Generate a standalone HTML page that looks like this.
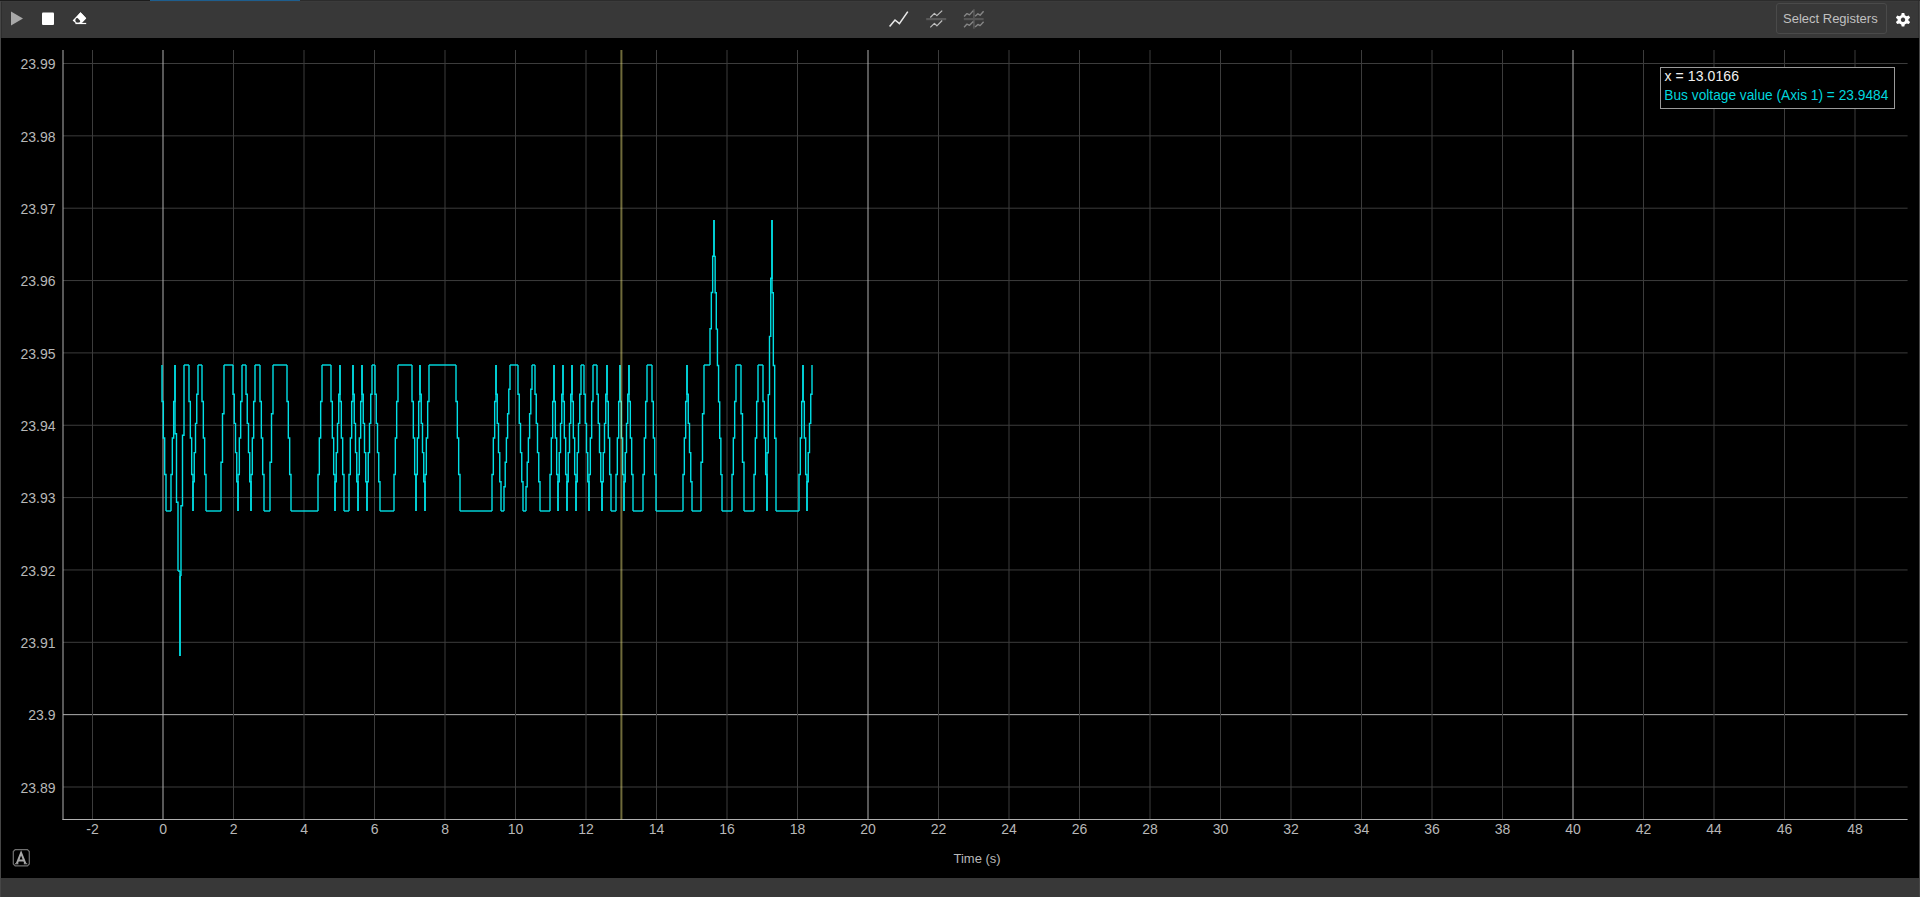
<!DOCTYPE html>
<html><head><meta charset="utf-8">
<style>
html,body{margin:0;padding:0;}
body{width:1920px;height:897px;overflow:hidden;background:#383838;position:relative;font-family:"Liberation Sans",sans-serif;}
#top{position:absolute;left:0;top:0;width:1920px;height:1px;background:#2c2c2c;}
#topl{position:absolute;left:0;top:0;width:150px;height:1px;background:#1c1c1c;}
#topb{position:absolute;left:150px;top:0;width:150px;height:1px;background:#1e5e8e;}
#lb{position:absolute;left:0;top:1px;width:1px;height:896px;background:#464646;}
#rb{position:absolute;left:1919px;top:1px;width:1px;height:896px;background:#474747;}
#rb2{position:absolute;left:1918px;top:1px;width:1px;height:37px;background:#303030;}
#lb2{position:absolute;left:1px;top:1px;width:1px;height:37px;background:#2e2e2e;}
#tl{position:absolute;left:1px;top:1px;width:1918px;height:1px;background:#3b3b3b;}
#plot{position:absolute;left:1px;top:38px;width:1918px;height:840px;background:#000;}
#btn{position:absolute;left:1776px;top:3px;width:111px;height:31px;border:1px solid #4a4a4a;border-radius:3px;box-sizing:border-box;}
#btntxt{position:absolute;left:1783px;top:11px;font-size:13px;color:#c0c0c0;line-height:16px;white-space:nowrap;}
svg text{font-family:"Liberation Sans",sans-serif;font-size:14px;fill:#b8b8b8;}
</style></head><body>
<div id="top"></div><div id="topl"></div><div id="topb"></div>
<div id="lb"></div><div id="lb2"></div><div id="tl"></div><div id="rb"></div><div id="rb2"></div>
<div id="plot"></div>
<div id="btn"></div>
<div id="btntxt">Select Registers</div>
<svg width="1920" height="897" style="position:absolute;left:0;top:0">
<!-- toolbar icons -->
<path d="M11,11.5 L23,18.5 L11,25.5 Z" fill="#a8a8a8"/>
<rect x="42" y="12.5" width="12" height="12.5" rx="1" fill="#ffffff"/>
<path d="M80.5,12.3 L86.2,18.3 L81.6,23 H75.6 L72.6,20.4 Z" fill="#ffffff"/>
<circle cx="77.9" cy="20.3" r="2.5" fill="#383838"/>
<path d="M80.5,12.3 L86.2,18.3 L82,22.7 L76.6,17 Z" fill="#ffffff"/>
<rect x="75.4" y="22.9" width="10.8" height="1.2" fill="#ffffff"/>
<path d="M889.6,26.4 L895,20 L899.4,23.6 L907.8,11.6" fill="none" stroke="#e8e8e8" stroke-width="1.6"/>
<rect x="926.2" y="18" width="20" height="2.2" fill="#595959"/>
<g fill="none" stroke="#bdbdbd" stroke-width="1.2" stroke-linejoin="round">
<path d="M930.3,17.5 L934.4,13.4 L936.9,15.6 L942.2,10.6"/>
<path d="M930.3,27.4 L934.4,23.4 L936.9,25.8 L942.2,20.5"/>
</g>
<rect x="963.8" y="18" width="19.8" height="2.2" fill="#555"/>
<rect x="973" y="9.2" width="1.8" height="19.5" fill="#555"/>
<g fill="none" stroke="#858585" stroke-width="1.4" stroke-linejoin="round">
<path d="M964.1,16.6 L967,13.6 L969.5,14.9 L973.3,10.6"/>
<path d="M975.1,16.3 L977.9,13.8 L980.1,15.2 L983.6,11.3"/>
<path d="M964.1,27.2 L967,24.1 L969.5,25.3 L973.3,21.6"/>
<path d="M975.1,27 L977.9,24.4 L980.1,25.6 L983.6,21.8"/>
</g>
<!-- gear -->
<g transform="translate(1903,19.8)">
<path d="M-1.3,-6.8 H1.3 L1.8,-4.6 L3.7,-3.6 L5.8,-4.3 L7.1,-2.1 L5.4,-0.6 V0.6 L7.1,2.1 L5.8,4.3 L3.7,3.6 L1.8,4.6 L1.3,6.8 H-1.3 L-1.8,4.6 L-3.7,3.6 L-5.8,4.3 L-7.1,2.1 L-5.4,0.6 V-0.6 L-7.1,-2.1 L-5.8,-4.3 L-3.7,-3.6 L-1.8,-4.6 Z M0,-2.2 A2.2,2.2 0 1 0 0.01,-2.2 Z" fill="#ffffff" fill-rule="evenodd"/>
</g>
<line x1="63" y1="63.50" x2="1907.6" y2="63.50" stroke="#3c3c3c" stroke-width="1"/>
<line x1="63" y1="135.85" x2="1907.6" y2="135.85" stroke="#3c3c3c" stroke-width="1"/>
<line x1="63" y1="208.20" x2="1907.6" y2="208.20" stroke="#3c3c3c" stroke-width="1"/>
<line x1="63" y1="280.55" x2="1907.6" y2="280.55" stroke="#3c3c3c" stroke-width="1"/>
<line x1="63" y1="352.90" x2="1907.6" y2="352.90" stroke="#3c3c3c" stroke-width="1"/>
<line x1="63" y1="425.25" x2="1907.6" y2="425.25" stroke="#3c3c3c" stroke-width="1"/>
<line x1="63" y1="497.60" x2="1907.6" y2="497.60" stroke="#3c3c3c" stroke-width="1"/>
<line x1="63" y1="569.95" x2="1907.6" y2="569.95" stroke="#3c3c3c" stroke-width="1"/>
<line x1="63" y1="642.30" x2="1907.6" y2="642.30" stroke="#3c3c3c" stroke-width="1"/>
<line x1="63" y1="714.65" x2="1907.6" y2="714.65" stroke="#b0b0b0" stroke-width="1"/>
<line x1="63" y1="787.00" x2="1907.6" y2="787.00" stroke="#3c3c3c" stroke-width="1"/>
<line x1="92.50" y1="50" x2="92.50" y2="819.5" stroke="#3c3c3c" stroke-width="1"/>
<line x1="163.00" y1="50" x2="163.00" y2="819.5" stroke="#b0b0b0" stroke-width="1"/>
<line x1="233.50" y1="50" x2="233.50" y2="819.5" stroke="#3c3c3c" stroke-width="1"/>
<line x1="304.00" y1="50" x2="304.00" y2="819.5" stroke="#3c3c3c" stroke-width="1"/>
<line x1="374.50" y1="50" x2="374.50" y2="819.5" stroke="#3c3c3c" stroke-width="1"/>
<line x1="445.00" y1="50" x2="445.00" y2="819.5" stroke="#3c3c3c" stroke-width="1"/>
<line x1="515.50" y1="50" x2="515.50" y2="819.5" stroke="#3c3c3c" stroke-width="1"/>
<line x1="586.00" y1="50" x2="586.00" y2="819.5" stroke="#3c3c3c" stroke-width="1"/>
<line x1="656.50" y1="50" x2="656.50" y2="819.5" stroke="#3c3c3c" stroke-width="1"/>
<line x1="727.00" y1="50" x2="727.00" y2="819.5" stroke="#3c3c3c" stroke-width="1"/>
<line x1="797.50" y1="50" x2="797.50" y2="819.5" stroke="#3c3c3c" stroke-width="1"/>
<line x1="868.00" y1="50" x2="868.00" y2="819.5" stroke="#b0b0b0" stroke-width="1"/>
<line x1="938.50" y1="50" x2="938.50" y2="819.5" stroke="#3c3c3c" stroke-width="1"/>
<line x1="1009.00" y1="50" x2="1009.00" y2="819.5" stroke="#3c3c3c" stroke-width="1"/>
<line x1="1079.50" y1="50" x2="1079.50" y2="819.5" stroke="#3c3c3c" stroke-width="1"/>
<line x1="1150.00" y1="50" x2="1150.00" y2="819.5" stroke="#3c3c3c" stroke-width="1"/>
<line x1="1220.50" y1="50" x2="1220.50" y2="819.5" stroke="#3c3c3c" stroke-width="1"/>
<line x1="1291.00" y1="50" x2="1291.00" y2="819.5" stroke="#3c3c3c" stroke-width="1"/>
<line x1="1361.50" y1="50" x2="1361.50" y2="819.5" stroke="#3c3c3c" stroke-width="1"/>
<line x1="1432.00" y1="50" x2="1432.00" y2="819.5" stroke="#3c3c3c" stroke-width="1"/>
<line x1="1502.50" y1="50" x2="1502.50" y2="819.5" stroke="#3c3c3c" stroke-width="1"/>
<line x1="1573.00" y1="50" x2="1573.00" y2="819.5" stroke="#b0b0b0" stroke-width="1"/>
<line x1="1643.50" y1="50" x2="1643.50" y2="819.5" stroke="#3c3c3c" stroke-width="1"/>
<line x1="1714.00" y1="50" x2="1714.00" y2="819.5" stroke="#3c3c3c" stroke-width="1"/>
<line x1="1784.50" y1="50" x2="1784.50" y2="819.5" stroke="#3c3c3c" stroke-width="1"/>
<line x1="1855.00" y1="50" x2="1855.00" y2="819.5" stroke="#3c3c3c" stroke-width="1"/>
<line x1="63.0" y1="50" x2="63.0" y2="820" stroke="#b0b0b0" stroke-width="1"/>
<line x1="62.5" y1="819.5" x2="1907.6" y2="819.5" stroke="#b0b0b0" stroke-width="1"/>
<text x="55.5" y="69.3" text-anchor="end">23.99</text>
<text x="55.5" y="141.7" text-anchor="end">23.98</text>
<text x="55.5" y="214.0" text-anchor="end">23.97</text>
<text x="55.5" y="286.4" text-anchor="end">23.96</text>
<text x="55.5" y="358.7" text-anchor="end">23.95</text>
<text x="55.5" y="431.1" text-anchor="end">23.94</text>
<text x="55.5" y="503.4" text-anchor="end">23.93</text>
<text x="55.5" y="575.8" text-anchor="end">23.92</text>
<text x="55.5" y="648.1" text-anchor="end">23.91</text>
<text x="55.5" y="720.4" text-anchor="end">23.9</text>
<text x="55.5" y="792.8" text-anchor="end">23.89</text>
<text x="92.6" y="834" text-anchor="middle">-2</text>
<text x="163.1" y="834" text-anchor="middle">0</text>
<text x="233.6" y="834" text-anchor="middle">2</text>
<text x="304.1" y="834" text-anchor="middle">4</text>
<text x="374.6" y="834" text-anchor="middle">6</text>
<text x="445.1" y="834" text-anchor="middle">8</text>
<text x="515.5" y="834" text-anchor="middle">10</text>
<text x="586.0" y="834" text-anchor="middle">12</text>
<text x="656.5" y="834" text-anchor="middle">14</text>
<text x="727.0" y="834" text-anchor="middle">16</text>
<text x="797.5" y="834" text-anchor="middle">18</text>
<text x="868.0" y="834" text-anchor="middle">20</text>
<text x="938.5" y="834" text-anchor="middle">22</text>
<text x="1009.0" y="834" text-anchor="middle">24</text>
<text x="1079.5" y="834" text-anchor="middle">26</text>
<text x="1150.0" y="834" text-anchor="middle">28</text>
<text x="1220.5" y="834" text-anchor="middle">30</text>
<text x="1291.0" y="834" text-anchor="middle">32</text>
<text x="1361.5" y="834" text-anchor="middle">34</text>
<text x="1432.0" y="834" text-anchor="middle">36</text>
<text x="1502.5" y="834" text-anchor="middle">38</text>
<text x="1573.0" y="834" text-anchor="middle">40</text>
<text x="1643.5" y="834" text-anchor="middle">42</text>
<text x="1714.0" y="834" text-anchor="middle">44</text>
<text x="1784.5" y="834" text-anchor="middle">46</text>
<text x="1855.0" y="834" text-anchor="middle">48</text>
<path d="M162,365H162.00V401.5H163.33V438.0H164.67V474.5H166.00V511.0" fill="none" stroke="#00e0e6" stroke-width="1.4"/>
<path d="M166,511H171" fill="none" stroke="#00e0e6" stroke-width="1.4"/>
<path d="M171,511H171.00V474.5H172.33V438.0H173.67V401.5H175.00V365.0" fill="none" stroke="#00e0e6" stroke-width="1.4"/>
<path d="M175,365H175.00V433.7H176.50V502.3H178.00V571.0" fill="none" stroke="#00e0e6" stroke-width="1.4"/>
<path d="M178,571H180" fill="none" stroke="#00e0e6" stroke-width="1.4"/>
<path d="M180,571V656" fill="none" stroke="#00e0e6" stroke-width="1.4"/>
<path d="M180,656V576" fill="none" stroke="#00e0e6" stroke-width="1.4"/>
<path d="M180,576H181" fill="none" stroke="#00e0e6" stroke-width="1.4"/>
<path d="M181,576H181.00V505.7H182.50V435.3H184.00V365.0" fill="none" stroke="#00e0e6" stroke-width="1.4"/>
<path d="M184,365H189" fill="none" stroke="#00e0e6" stroke-width="1.4"/>
<path d="M189,365H189.00V401.5H190.33V438.0H191.67V474.5H193.00V511.0" fill="none" stroke="#00e0e6" stroke-width="1.4"/>
<path d="M193,511H193.00V481.8H194.25V452.6H195.50V423.4H196.75V394.2H198.00V365.0" fill="none" stroke="#00e0e6" stroke-width="1.4"/>
<path d="M198,365H202" fill="none" stroke="#00e0e6" stroke-width="1.4"/>
<path d="M202,365H202.00V401.5H203.33V438.0H204.67V474.5H206.00V511.0" fill="none" stroke="#00e0e6" stroke-width="1.4"/>
<path d="M206,511H221" fill="none" stroke="#00e0e6" stroke-width="1.4"/>
<path d="M221,511H221.00V462.3H222.50V413.7H224.00V365.0" fill="none" stroke="#00e0e6" stroke-width="1.4"/>
<path d="M224,365H233" fill="none" stroke="#00e0e6" stroke-width="1.4"/>
<path d="M233,365H233.00V394.2H234.25V423.4H235.50V452.6H236.75V481.8H238.00V511.0" fill="none" stroke="#00e0e6" stroke-width="1.4"/>
<path d="M238,511H238.00V474.5H239.33V438.0H240.67V401.5H242.00V365.0" fill="none" stroke="#00e0e6" stroke-width="1.4"/>
<path d="M242,365H246" fill="none" stroke="#00e0e6" stroke-width="1.4"/>
<path d="M246,365H246.00V394.2H247.25V423.4H248.50V452.6H249.75V481.8H251.00V511.0" fill="none" stroke="#00e0e6" stroke-width="1.4"/>
<path d="M251,511H251.00V474.5H252.33V438.0H253.67V401.5H255.00V365.0" fill="none" stroke="#00e0e6" stroke-width="1.4"/>
<path d="M255,365H260" fill="none" stroke="#00e0e6" stroke-width="1.4"/>
<path d="M260,365H260.00V401.5H261.33V438.0H262.67V474.5H264.00V511.0" fill="none" stroke="#00e0e6" stroke-width="1.4"/>
<path d="M264,511H270" fill="none" stroke="#00e0e6" stroke-width="1.4"/>
<path d="M270,511H270.00V462.3H271.50V413.7H273.00V365.0" fill="none" stroke="#00e0e6" stroke-width="1.4"/>
<path d="M273,365H287" fill="none" stroke="#00e0e6" stroke-width="1.4"/>
<path d="M287,365H287.00V401.5H288.33V438.0H289.67V474.5H291.00V511.0" fill="none" stroke="#00e0e6" stroke-width="1.4"/>
<path d="M291,511H318" fill="none" stroke="#00e0e6" stroke-width="1.4"/>
<path d="M318,511H318.00V474.5H319.33V438.0H320.67V401.5H322.00V365.0" fill="none" stroke="#00e0e6" stroke-width="1.4"/>
<path d="M322,365H331" fill="none" stroke="#00e0e6" stroke-width="1.4"/>
<path d="M331,365H331.00V401.5H332.33V438.0H333.67V474.5H335.00V511.0" fill="none" stroke="#00e0e6" stroke-width="1.4"/>
<path d="M335,511H335.00V481.8H336.25V452.6H337.50V423.4H338.75V394.2H340.00V365.0" fill="none" stroke="#00e0e6" stroke-width="1.4"/>
<path d="M340,365H340.00V401.5H341.33V438.0H342.67V474.5H344.00V511.0" fill="none" stroke="#00e0e6" stroke-width="1.4"/>
<path d="M344,511H349" fill="none" stroke="#00e0e6" stroke-width="1.4"/>
<path d="M349,511H349.00V474.5H350.33V438.0H351.67V401.5H353.00V365.0" fill="none" stroke="#00e0e6" stroke-width="1.4"/>
<path d="M353,365H353.00V394.2H354.25V423.4H355.50V452.6H356.75V481.8H358.00V511.0" fill="none" stroke="#00e0e6" stroke-width="1.4"/>
<path d="M358,511H358.00V474.5H359.33V438.0H360.67V401.5H362.00V365.0" fill="none" stroke="#00e0e6" stroke-width="1.4"/>
<path d="M362,365H362.00V394.2H363.25V423.4H364.50V452.6H365.75V481.8H367.00V511.0" fill="none" stroke="#00e0e6" stroke-width="1.4"/>
<path d="M367,511H367.00V481.8H368.25V452.6H369.50V423.4H370.75V394.2H372.00V365.0" fill="none" stroke="#00e0e6" stroke-width="1.4"/>
<path d="M372,365H375" fill="none" stroke="#00e0e6" stroke-width="1.4"/>
<path d="M375,365H375.00V394.2H376.25V423.4H377.50V452.6H378.75V481.8H380.00V511.0" fill="none" stroke="#00e0e6" stroke-width="1.4"/>
<path d="M380,511H394" fill="none" stroke="#00e0e6" stroke-width="1.4"/>
<path d="M394,511H394.00V474.5H395.33V438.0H396.67V401.5H398.00V365.0" fill="none" stroke="#00e0e6" stroke-width="1.4"/>
<path d="M398,365H412" fill="none" stroke="#00e0e6" stroke-width="1.4"/>
<path d="M412,365H412.00V401.5H413.33V438.0H414.67V474.5H416.00V511.0" fill="none" stroke="#00e0e6" stroke-width="1.4"/>
<path d="M416,511H416.00V474.5H417.33V438.0H418.67V401.5H420.00V365.0" fill="none" stroke="#00e0e6" stroke-width="1.4"/>
<path d="M420,365H420.00V394.2H421.25V423.4H422.50V452.6H423.75V481.8H425.00V511.0" fill="none" stroke="#00e0e6" stroke-width="1.4"/>
<path d="M425,511H425.00V474.5H426.33V438.0H427.67V401.5H429.00V365.0" fill="none" stroke="#00e0e6" stroke-width="1.4"/>
<path d="M429,365H456" fill="none" stroke="#00e0e6" stroke-width="1.4"/>
<path d="M456,365H456.00V401.5H457.33V438.0H458.67V474.5H460.00V511.0" fill="none" stroke="#00e0e6" stroke-width="1.4"/>
<path d="M460,511H492" fill="none" stroke="#00e0e6" stroke-width="1.4"/>
<path d="M492,511H492.00V474.5H493.33V438.0H494.67V401.5H496.00V365.0" fill="none" stroke="#00e0e6" stroke-width="1.4"/>
<path d="M496,365H496.00V394.2H497.25V423.4H498.50V452.6H499.75V481.8H501.00V511.0" fill="none" stroke="#00e0e6" stroke-width="1.4"/>
<path d="M501,511H504" fill="none" stroke="#00e0e6" stroke-width="1.4"/>
<path d="M504,511H504.00V486.7H505.20V462.3H506.40V438.0H507.60V413.7H508.80V389.3H510.00V365.0" fill="none" stroke="#00e0e6" stroke-width="1.4"/>
<path d="M510,365H518" fill="none" stroke="#00e0e6" stroke-width="1.4"/>
<path d="M518,365H518.00V394.2H519.25V423.4H520.50V452.6H521.75V481.8H523.00V511.0" fill="none" stroke="#00e0e6" stroke-width="1.4"/>
<path d="M523,511H526" fill="none" stroke="#00e0e6" stroke-width="1.4"/>
<path d="M526,511H526.00V486.7H527.20V462.3H528.40V438.0H529.60V413.7H530.80V389.3H532.00V365.0" fill="none" stroke="#00e0e6" stroke-width="1.4"/>
<path d="M532,365H535" fill="none" stroke="#00e0e6" stroke-width="1.4"/>
<path d="M535,365H535.00V394.2H536.25V423.4H537.50V452.6H538.75V481.8H540.00V511.0" fill="none" stroke="#00e0e6" stroke-width="1.4"/>
<path d="M540,511H550" fill="none" stroke="#00e0e6" stroke-width="1.4"/>
<path d="M550,511H550.00V474.5H551.33V438.0H552.67V401.5H554.00V365.0" fill="none" stroke="#00e0e6" stroke-width="1.4"/>
<path d="M554,365H554.00V401.5H555.33V438.0H556.67V474.5H558.00V511.0" fill="none" stroke="#00e0e6" stroke-width="1.4"/>
<path d="M558,511H558.00V481.8H559.25V452.6H560.50V423.4H561.75V394.2H563.00V365.0" fill="none" stroke="#00e0e6" stroke-width="1.4"/>
<path d="M563,365H563.00V401.5H564.33V438.0H565.67V474.5H567.00V511.0" fill="none" stroke="#00e0e6" stroke-width="1.4"/>
<path d="M567,511H567.00V481.8H568.25V452.6H569.50V423.4H570.75V394.2H572.00V365.0" fill="none" stroke="#00e0e6" stroke-width="1.4"/>
<path d="M572,365H572.00V401.5H573.33V438.0H574.67V474.5H576.00V511.0" fill="none" stroke="#00e0e6" stroke-width="1.4"/>
<path d="M576,511H576.00V481.8H577.25V452.6H578.50V423.4H579.75V394.2H581.00V365.0" fill="none" stroke="#00e0e6" stroke-width="1.4"/>
<path d="M581,365H584" fill="none" stroke="#00e0e6" stroke-width="1.4"/>
<path d="M584,365H584.00V394.2H585.25V423.4H586.50V452.6H587.75V481.8H589.00V511.0" fill="none" stroke="#00e0e6" stroke-width="1.4"/>
<path d="M589,511H589.00V474.5H590.33V438.0H591.67V401.5H593.00V365.0" fill="none" stroke="#00e0e6" stroke-width="1.4"/>
<path d="M593,365H597" fill="none" stroke="#00e0e6" stroke-width="1.4"/>
<path d="M597,365H597.00V394.2H598.25V423.4H599.50V452.6H600.75V481.8H602.00V511.0" fill="none" stroke="#00e0e6" stroke-width="1.4"/>
<path d="M602,511H602.00V481.8H603.25V452.6H604.50V423.4H605.75V394.2H607.00V365.0" fill="none" stroke="#00e0e6" stroke-width="1.4"/>
<path d="M607,365H607.00V401.5H608.33V438.0H609.67V474.5H611.00V511.0" fill="none" stroke="#00e0e6" stroke-width="1.4"/>
<path d="M611,511H616" fill="none" stroke="#00e0e6" stroke-width="1.4"/>
<path d="M616,511H616.00V474.5H617.33V438.0H618.67V401.5H620.00V365.0" fill="none" stroke="#00e0e6" stroke-width="1.4"/>
<path d="M620,365H620.00V401.5H621.33V438.0H622.67V474.5H624.00V511.0" fill="none" stroke="#00e0e6" stroke-width="1.4"/>
<path d="M624,511H624.00V481.8H625.25V452.6H626.50V423.4H627.75V394.2H629.00V365.0" fill="none" stroke="#00e0e6" stroke-width="1.4"/>
<path d="M629,365H629.00V401.5H630.33V438.0H631.67V474.5H633.00V511.0" fill="none" stroke="#00e0e6" stroke-width="1.4"/>
<path d="M633,511H643" fill="none" stroke="#00e0e6" stroke-width="1.4"/>
<path d="M643,511H643.00V474.5H644.33V438.0H645.67V401.5H647.00V365.0" fill="none" stroke="#00e0e6" stroke-width="1.4"/>
<path d="M647,365H652" fill="none" stroke="#00e0e6" stroke-width="1.4"/>
<path d="M652,365H652.00V401.5H653.33V438.0H654.67V474.5H656.00V511.0" fill="none" stroke="#00e0e6" stroke-width="1.4"/>
<path d="M656,511H683" fill="none" stroke="#00e0e6" stroke-width="1.4"/>
<path d="M683,511H683.00V474.5H684.33V438.0H685.67V401.5H687.00V365.0" fill="none" stroke="#00e0e6" stroke-width="1.4"/>
<path d="M687,365H687.00V394.2H688.25V423.4H689.50V452.6H690.75V481.8H692.00V511.0" fill="none" stroke="#00e0e6" stroke-width="1.4"/>
<path d="M692,511H701" fill="none" stroke="#00e0e6" stroke-width="1.4"/>
<path d="M701,511H701.00V462.3H702.50V413.7H704.00V365.0" fill="none" stroke="#00e0e6" stroke-width="1.4"/>
<path d="M704,365H710" fill="none" stroke="#00e0e6" stroke-width="1.4"/>
<path d="M710,365H710.00V328.8H711.33V292.5H712.67V256.2H714.00V220.0" fill="none" stroke="#00e0e6" stroke-width="1.4"/>
<path d="M714,220H714.00V256.4H715.14V292.8H716.29V329.1H717.43V365.5H718.57V401.9H719.71V438.2H720.86V474.6H722.00V511.0" fill="none" stroke="#00e0e6" stroke-width="1.4"/>
<path d="M722,511H732" fill="none" stroke="#00e0e6" stroke-width="1.4"/>
<path d="M732,511H732.00V474.5H733.33V438.0H734.67V401.5H736.00V365.0" fill="none" stroke="#00e0e6" stroke-width="1.4"/>
<path d="M736,365H741" fill="none" stroke="#00e0e6" stroke-width="1.4"/>
<path d="M741,365H741.00V413.7H742.50V462.3H744.00V511.0" fill="none" stroke="#00e0e6" stroke-width="1.4"/>
<path d="M744,511H754" fill="none" stroke="#00e0e6" stroke-width="1.4"/>
<path d="M754,511H754.00V474.5H755.33V438.0H756.67V401.5H758.00V365.0" fill="none" stroke="#00e0e6" stroke-width="1.4"/>
<path d="M758,365H763" fill="none" stroke="#00e0e6" stroke-width="1.4"/>
<path d="M763,365H763.00V401.5H764.33V438.0H765.67V474.5H767.00V511.0" fill="none" stroke="#00e0e6" stroke-width="1.4"/>
<path d="M767,511H767.00V452.8H768.25V394.6H769.50V336.4H770.75V278.2H772.00V220.0" fill="none" stroke="#00e0e6" stroke-width="1.4"/>
<path d="M772,220H772.00V292.8H773.33V365.5H774.67V438.2H776.00V511.0" fill="none" stroke="#00e0e6" stroke-width="1.4"/>
<path d="M776,511H799" fill="none" stroke="#00e0e6" stroke-width="1.4"/>
<path d="M799,511H799.00V474.5H800.33V438.0H801.67V401.5H803.00V365.0" fill="none" stroke="#00e0e6" stroke-width="1.4"/>
<path d="M803,365H803.00V401.5H804.33V438.0H805.67V474.5H807.00V511.0" fill="none" stroke="#00e0e6" stroke-width="1.4"/>
<path d="M807,511H807.00V481.8H808.25V452.6H809.50V423.4H810.75V394.2H812.00V365.0" fill="none" stroke="#00e0e6" stroke-width="1.4"/>
<rect x="620.4" y="50" width="2" height="769.5" fill="#f4ea80" fill-opacity="0.45"/>
<text x="953.5" y="862.7" style="font-size:13px">Time (s)</text>
<rect x="1660.5" y="67.5" width="234" height="41" fill="#000" stroke="#9a9a9a" stroke-width="1"/>
<text x="1664.5" y="81.4" style="fill:#f0f0f0;font-size:14px" textLength="74.5" lengthAdjust="spacing">x = 13.0166</text>
<text x="1664.3" y="100.3" style="fill:#00d6de;font-size:14px" textLength="224" lengthAdjust="spacingAndGlyphs">Bus voltage value (Axis 1) = 23.9484</text>
<path d="M15.2,849.6 H27.4 L29.3,851.5 V864 L27.4,865.9 H15.2 L13.3,864 V851.5 Z" fill="none" stroke="#707070" stroke-width="1.2"/>
<path d="M16.9,863.4 L21.1,853 L25.3,863.4 M18.4,860.5 H23.8" fill="none" stroke="#a8a8a8" stroke-width="2"/><path d="M15,863.8 H18.4 M23.8,863.8 H27.2" stroke="#a8a8a8" stroke-width="1.1"/>
</svg>
</body></html>
